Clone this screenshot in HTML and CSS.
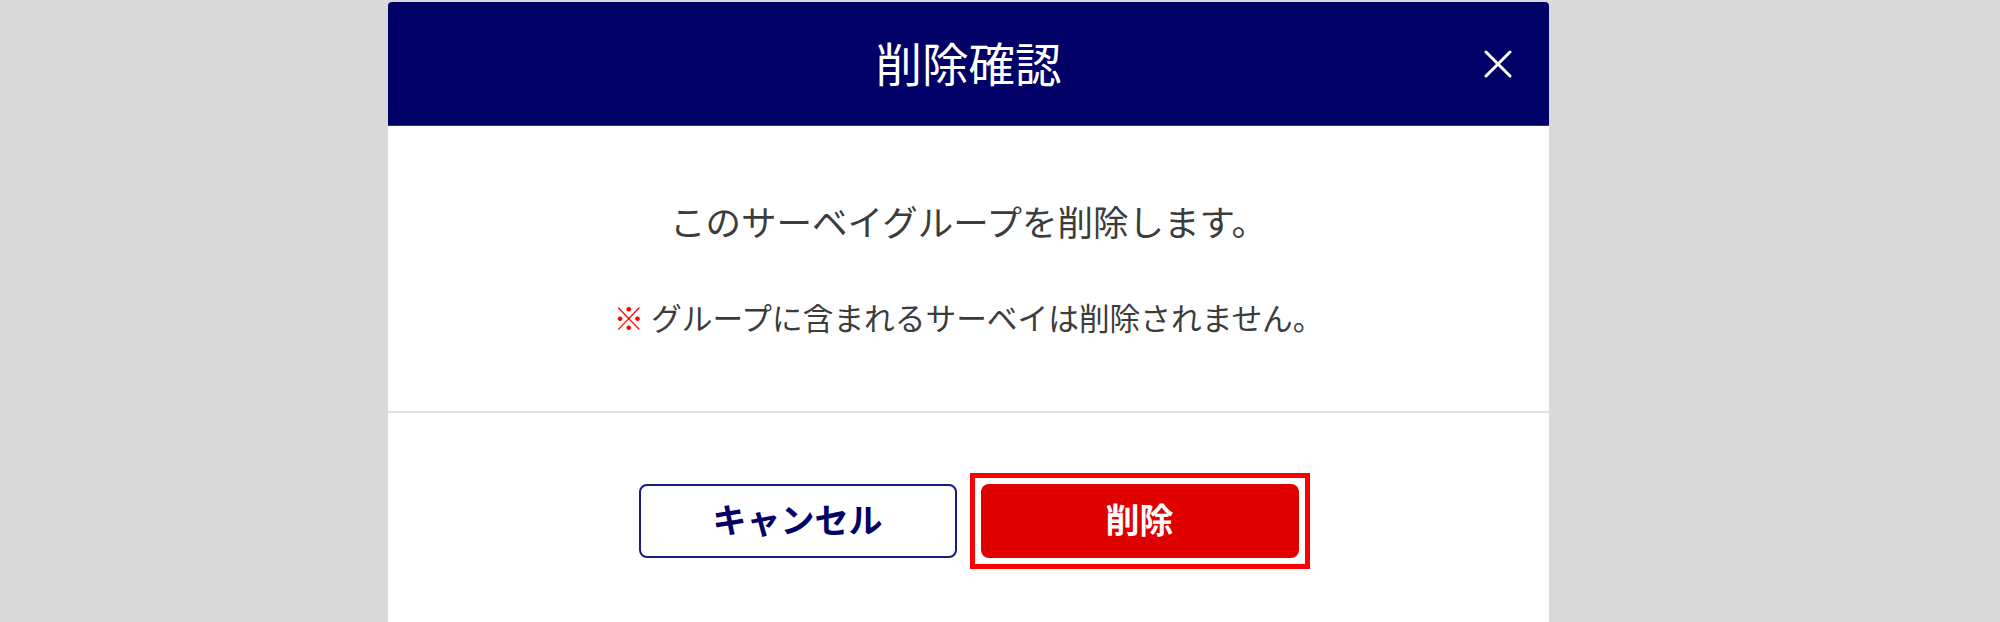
FILE: index.html
```html
<!DOCTYPE html>
<html lang="ja">
<head>
<meta charset="utf-8">
<title>削除確認</title>
<link rel="stylesheet" href="styles.css">
</head>
<body>
<div class="modal">
  <div class="modal-header">
    <span class="spacer"></span>
    <h1 class="modal-title">削除確認</h1>
    <div class="close-cell">
      <button class="close-btn" aria-label="閉じる">
        <svg width="28" height="28" viewBox="0 0 28 28"><path d="M2 2 L26 26 M26 2 L2 26" stroke="#fff" stroke-width="3" stroke-linecap="round" fill="none"/></svg>
      </button>
    </div>
  </div>
  <div class="modal-body">
    <p class="message">このサーベイグループを削除します。</p>
    <p class="note"><span class="mark">※</span> グループに含まれるサーベイは削除されません。</p>
  </div>
  <div class="modal-footer">
    <button class="btn btn-cancel">キャンセル</button>
    <button class="btn btn-delete">削除</button>
  </div>
</div>
</body>
</html>
```
FILE: styles.css
```css
html, body {
  margin: 0;
  padding: 0;
}
body {
  background: #d9d9d9;
  width: 2000px;
  height: 622px;
  overflow: hidden;
  font-family: "Noto Sans CJK JP", "Noto Sans", sans-serif;
}
.modal {
  width: 1161px;
  margin: 2px 0 0 388px;
  background: #ffffff;
  border-radius: 4px 4px 0 0;
  height: 640px;
}
.modal-header {
  height: 123px;
  background: #000066;
  border-radius: 4px 4px 0 0;
  border-bottom: 1px solid #33338a;
  display: grid;
  grid-template-columns: 1fr auto 1fr;
  align-items: center;
}
.modal-title {
  margin: 0;
  color: #ffffff;
  font-size: 46.5px;
  font-weight: 400;
  line-height: 1;
  padding-bottom: 2px;
}
.close-cell {
  display: flex;
  justify-content: flex-end;
  padding-right: 37px;
}
.close-btn {
  background: none;
  border: 0;
  padding: 0;
  width: 28px;
  height: 28px;
  display: block;
}
.close-btn svg {
  display: block;
}
.modal-body {
  padding: 69px 0 71px;
  text-align: center;
  border-bottom: 2px solid #e0e0e0;
}
.message {
  margin: 0;
  font-size: 35.5px;
  line-height: 52px;
  color: #3c3c3c;
}
.note {
  margin: 47px 0 0;
  font-size: 30.7px;
  line-height: 46px;
  color: #3c3c3c;
}
.mark {
  color: #ff0000;
}
.modal-footer {
  display: flex;
  justify-content: center;
  gap: 24px;
  padding-top: 71px;
}
.btn {
  width: 318px;
  height: 74px;
  border-radius: 8px;
  font-family: "Noto Sans CJK JP", "Noto Sans", sans-serif;
  font-size: 34px;
  font-weight: 700;
  line-height: 1;
  padding: 0 0 4px;
  cursor: pointer;
}
.btn-cancel {
  background: #ffffff;
  border: 2px solid #1a1a80;
  color: #000066;
}
.btn-delete {
  position: relative;
  background: #e00000;
  border: 0;
  color: #ffffff;
}
.btn-delete::after {
  content: "";
  position: absolute;
  top: -11px;
  left: -11px;
  right: -11px;
  bottom: -11px;
  border: 5px solid #ff0000;
}
```
